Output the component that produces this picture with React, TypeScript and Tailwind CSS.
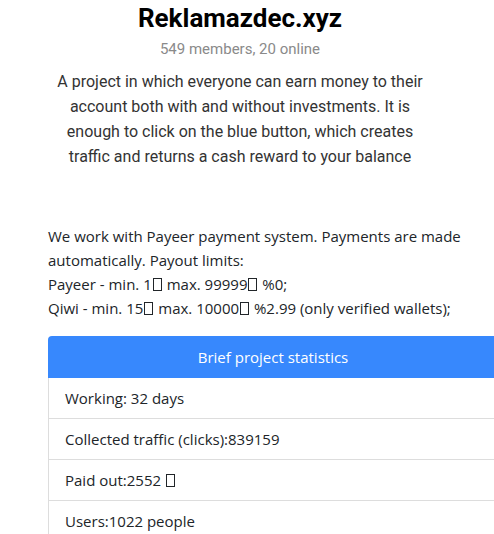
import React from "react";

const Box = () => (
  <span className="inline-block w-[9px] h-[13px] border border-current align-[-1px] mx-[1px]" />
);

export default function App() {
  return (
    <div className="w-[494px] h-[534px] overflow-hidden bg-white">
      <div className="w-[480px] flex flex-col items-center" style={{ fontFamily: "Roboto, sans-serif" }}>
        <h1 className="mt-[2px] text-[26px] font-bold leading-[32px] text-black">Reklamazdec.xyz</h1>
        <div className="mt-[5px] text-[15px] leading-[20px] text-[#8a8a8a]">549 members, 20 online</div>
        <p className="mt-[10px] w-[380px] text-center text-[16px] leading-[25px] text-[#333]">
          A project in which everyone can earn money to their account both with and without investments. It is enough to click on the blue button, which creates traffic and returns a cash reward to your balance
        </p>
      </div>
      <div className="pl-[48px] mt-[55px]" style={{ fontFamily: "'Open Sans', sans-serif" }}>
        <p className="w-[420px] text-[15px] leading-[24px] text-[#212529]">
          We work with Payeer payment system. Payments are made automatically. Payout limits:
          <br />
          Payeer - min. 1<Box /> max. 99999<Box /> %0;
          <br />
          Qiwi - min. 15<Box /> max. 10000<Box /> %2.99 (only verified wallets);
        </p>
        <div className="mt-[16px] w-[450px]">
          <div className="h-[42px] flex items-center justify-center rounded-t-[4px] bg-[#3788fd] text-white text-[15px]">
            Brief project statistics
          </div>
          <div className="border-l border-r border-[#dddddd] text-[15px] text-[#212529]">
            <div className="h-[41px] flex items-center pl-[16px] border-b border-[#dddddd]"><span>Working: 32 days</span></div>
            <div className="h-[41px] flex items-center pl-[16px] border-b border-[#dddddd]"><span>Collected traffic (clicks):839159</span></div>
            <div className="h-[41px] flex items-center pl-[16px] border-b border-[#dddddd]"><span>Paid out:2552 <Box /></span></div>
            <div className="h-[41px] flex items-center pl-[16px] border-b border-[#dddddd]"><span>Users:1022 people</span></div>
          </div>
        </div>
      </div>
    </div>
  );
}
